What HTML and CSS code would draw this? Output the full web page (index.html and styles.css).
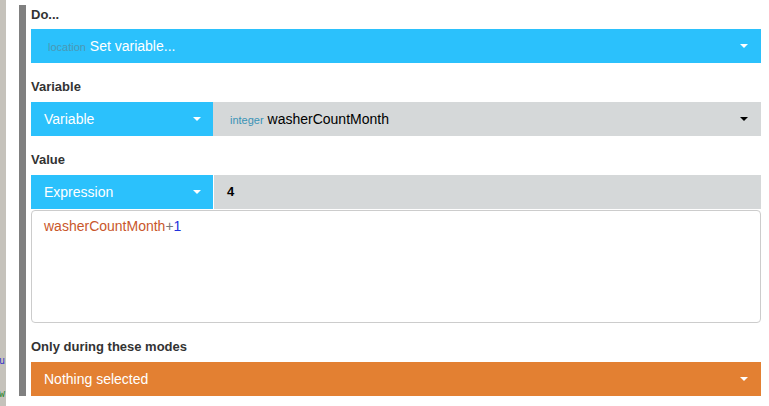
FILE: index.html
```html
<!DOCTYPE html>
<html lang="en">
<head>
    <meta charset="UTF-8">
    <title>Set variable</title>
    <link rel="stylesheet" href="styles.css">
</head>
<body>

    <div class="sidebar">
        <span class="code code-blue">u</span>
        <span class="code code-green">w</span>
    </div>

    <div class="panel">
        <div class="label first">Do...</div>
        <div class="select blue action">
            <span class="hint">location</span> Set variable...
            <span class="caret"></span>
        </div>

        <div class="label">Variable</div>
        <div class="row">
            <div class="select blue half">
                Variable
                <span class="caret"></span>
            </div>
            <div class="select gray">
                <span class="hint hint-gray">integer</span> washerCountMonth
                <span class="caret dark"></span>
            </div>
        </div>

        <div class="label">Value</div>
        <div class="row">
            <div class="select blue half">
                Expression
                <span class="caret"></span>
            </div>
            <div class="input gray">4</div>
        </div>
        <div class="editor">
            <span class="tok-var">washerCountMonth</span><span class="tok-op">+</span><span class="tok-num">1</span>
        </div>

        <div class="label">Only during these modes</div>
        <div class="select orange">
            Nothing selected
            <span class="caret"></span>
        </div>
    </div>

</body>
</html>
```

FILE: styles.css
```css
body {
    margin: 0;
    font-family: "Liberation Sans", Arial, sans-serif;
    background-color: #fff;
    display: flex;
    height: 406px;
    overflow: hidden;
}

.sidebar {
    width: 6px;
    background-color: #c5c2bb;
    position: relative;
    overflow: hidden;
}

.code {
    position: absolute;
    left: -1px;
    font-family: "DejaVu Sans Mono", monospace;
    font-size: 10px;
}

.code-blue {
    top: 355px;
    color: #3535c8;
}

.code-green {
    top: 388px;
    color: #2f8a2f;
}

.panel {
    margin: 5px 0 0 13px;
    height: 391px;
    width: 730px;
    border-left: 7px solid #808080;
    padding-left: 5px;
}

.label {
    padding: 15px 0 6px;
    line-height: 18px;
    font-size: 13px;
    font-weight: bold;
    color: #333;
}

.label.first {
    padding: 1px 0 5px;
}

.row {
    display: flex;
}

.select {
    position: relative;
    height: 34px;
    line-height: 34px;
    padding-left: 13px;
    font-size: 14px;
    color: #fff;
    box-sizing: border-box;
}

.select.action {
    padding-left: 17px;
}

.blue {
    background-color: #2bc1fc;
}

.orange {
    background-color: #e38032;
}

.gray {
    background-color: #d5d8d9;
    color: #000;
}

.half {
    width: 182px;
    flex: none;
}

.row .gray {
    flex: 1;
    padding-left: 17px;
}

.hint {
    font-size: 11px;
    color: #4a98b3;
}

.hint-gray {
    color: #3a93b6;
}

.caret {
    position: absolute;
    right: 13px;
    top: 15px;
    width: 0;
    height: 0;
    border-left: 4px solid transparent;
    border-right: 4px solid transparent;
    border-top: 4px solid #fff;
}

.half .caret {
    right: 12px;
}

.caret.dark {
    border-top-color: #000;
    right: 13px;
}

.input {
    flex: 1;
    height: 34px;
    line-height: 34px;
    margin-left: 1px;
    padding-left: 13px !important;
    font-size: 13px;
    font-weight: bold;
}

.editor {
    margin-top: 1px;
    height: 113px;
    box-sizing: border-box;
    border: 1px solid #ccc;
    border-radius: 4px;
    padding: 6px 12px;
    font-size: 14px;
    line-height: 18px;
}

.tok-var {
    color: #c9572b;
}

.tok-op {
    color: #777;
}

.tok-num {
    color: #2233dd;
}
```
